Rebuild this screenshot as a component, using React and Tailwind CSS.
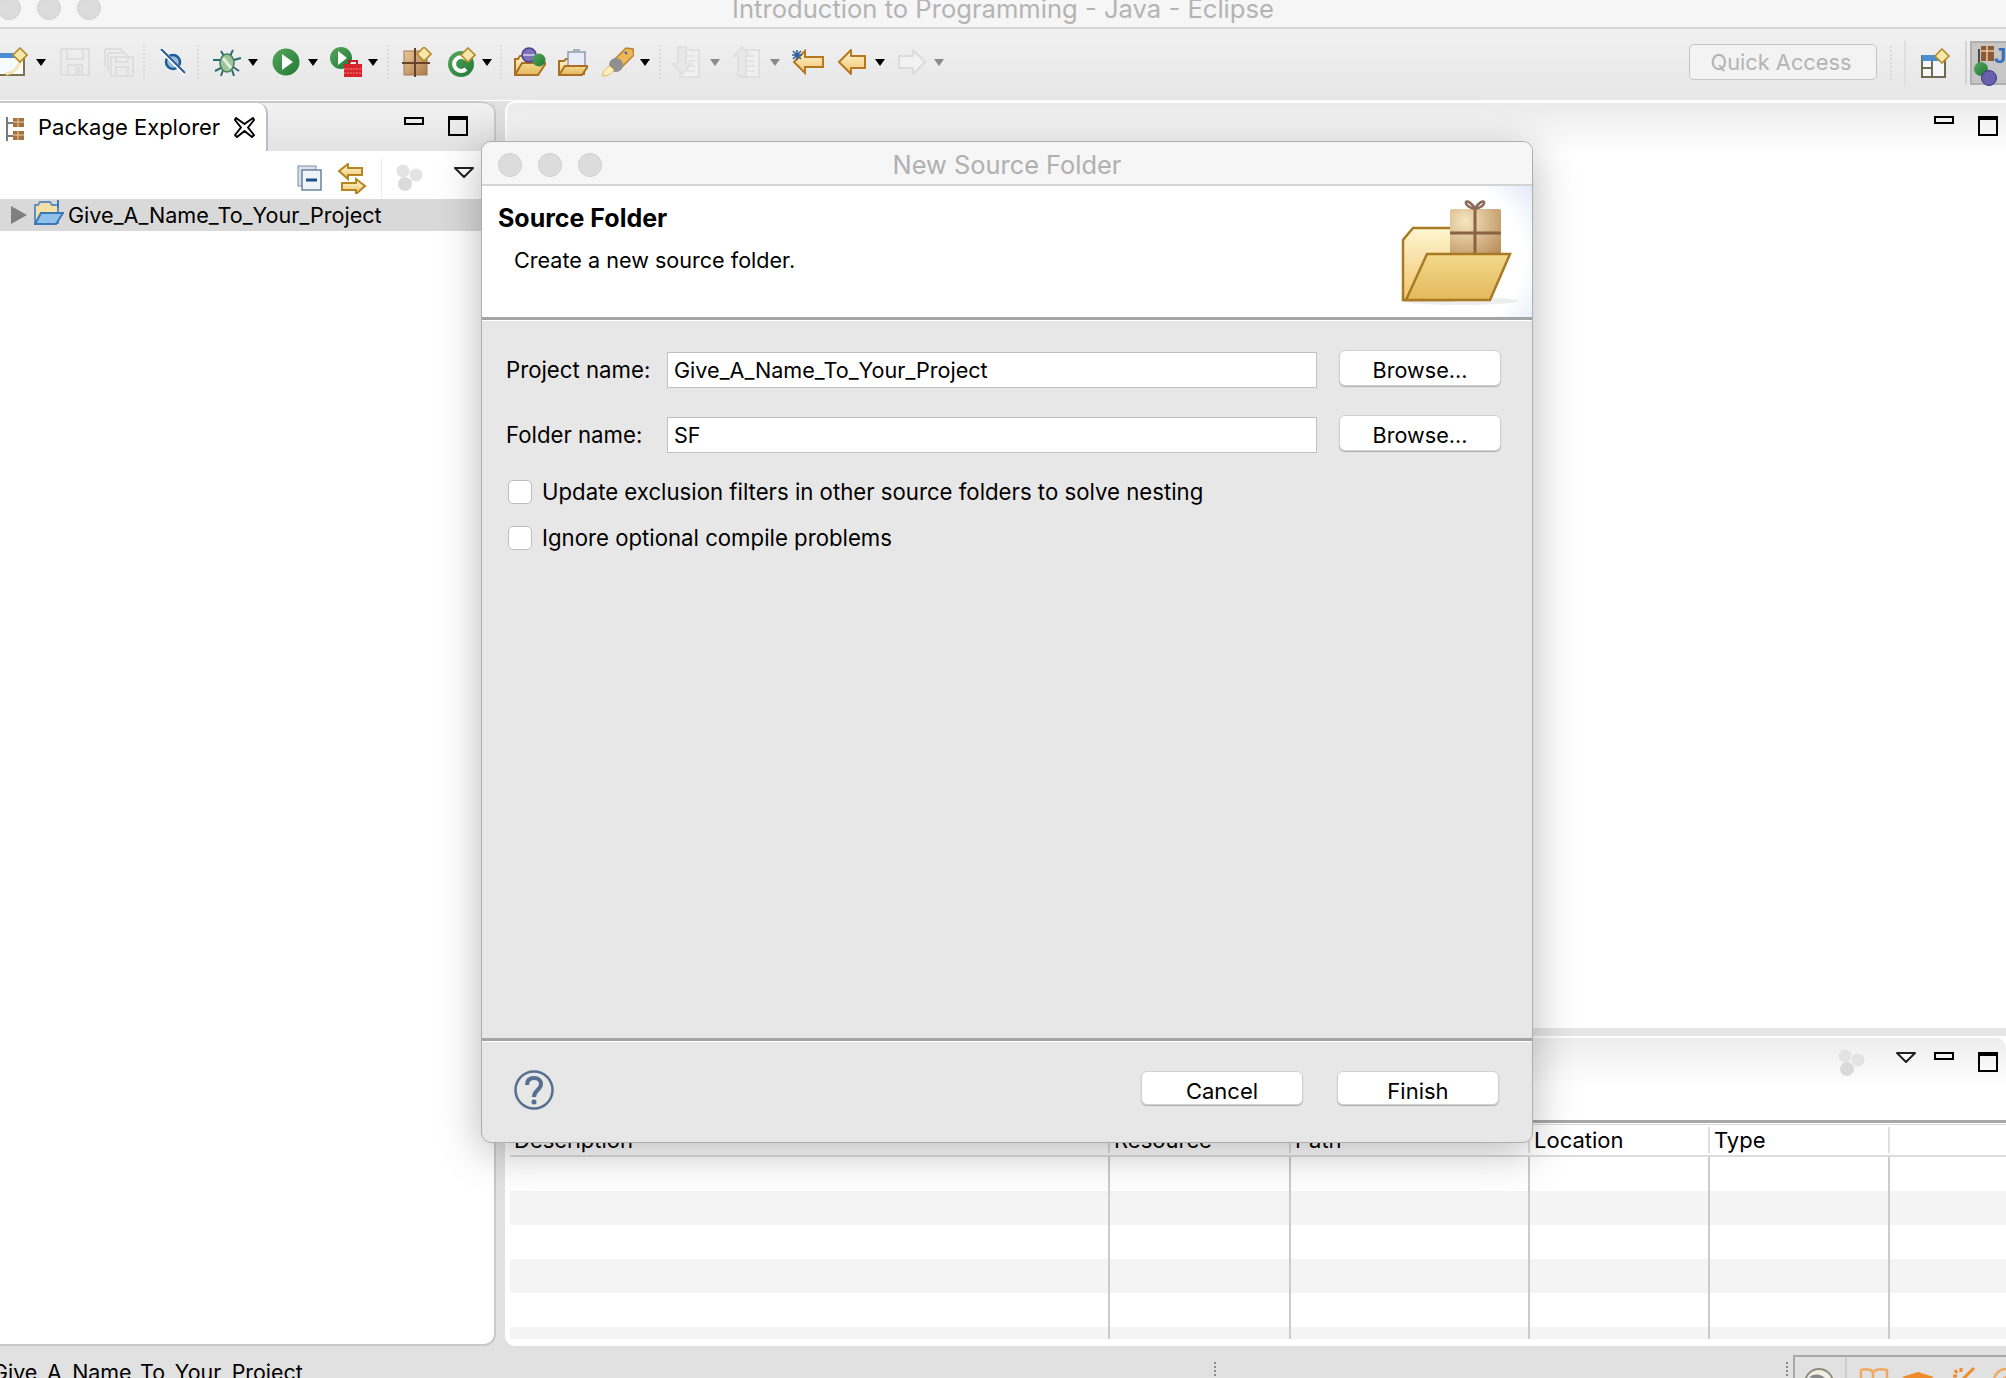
const font = { fontFamily: "Inter, 'Liberation Sans', sans-serif" };

function Defs() {
  return (
    <svg className="absolute w-0 h-0">
      <defs>
        <linearGradient id="gold" x1="0" y1="0" x2="0" y2="1">
          <stop offset="0" stopColor="#fff6d2" />
          <stop offset="1" stopColor="#f1c46c" />
        </linearGradient>
        <linearGradient id="green" x1="0" y1="0" x2="1" y2="1">
          <stop offset="0" stopColor="#58a55c" />
          <stop offset="1" stopColor="#1f7a35" />
        </linearGradient>
        <linearGradient id="tan" x1="0" y1="0" x2="1" y2="1">
          <stop offset="0" stopColor="#e9c89a" />
          <stop offset="1" stopColor="#a97a48" />
        </linearGradient>
        <radialGradient id="box" cx="0.3" cy="0.25" r="0.9">
          <stop offset="0" stopColor="#f6e6bf" />
          <stop offset="1" stopColor="#b98d5c" />
        </radialGradient>
        <linearGradient id="flap" x1="0" y1="0" x2="0" y2="1">
          <stop offset="0" stopColor="#f3d98c" />
          <stop offset="1" stopColor="#e3b95c" />
        </linearGradient>
        <radialGradient id="banner" cx="0.3" cy="0.55" r="1">
          <stop offset="0.65" stopColor="#ffffff" />
          <stop offset="1" stopColor="#d4dff5" />
        </radialGradient>
      </defs>
    </svg>
  );
}

function Caret({ className, grey }) {
  return (
    <svg className={className} width="10" height="7" viewBox="0 0 10 7">
      <path d="M0 0h10L5 7z" fill={grey ? "#8a8a8a" : "#000"} />
    </svg>
  );
}

function Dots({ className }) {
  return <div className={`w-[2px] h-[34px] border-l-2 border-dotted border-[#dcdad4] ${className}`} />;
}

function Diamond({ x, y }) {
  return <path d={`M${x} ${y - 7}l7 7-7 7-7-7z`} fill="#f7e7a8" stroke="#b48a2c" strokeWidth="1.6" />;
}

function NewWizard({ className }) {
  return (
    <svg className={className} width="30" height="30" viewBox="0 0 30 30">
      <rect x="1" y="7" width="25" height="21" fill="#f6fbff" stroke="#7d7346" strokeWidth="2" />
      <rect x="1" y="6" width="25" height="5" fill="#4d8ed0" />
      <path d="M8 27c7-1 12-5 14-13" fill="none" stroke="#f6e3ae" strokeWidth="3" />
      <Diamond x="22" y="8" />
    </svg>
  );
}

function Save({ className }) {
  return (
    <svg className={className} width="30" height="30" viewBox="0 0 30 30" fill="none" stroke="#dedede" strokeWidth="2">
      <path d="M1 2h28v26H1z" />
      <path d="M7 2v10h16V2M8 28V18h14v10" />
      <path d="M16 21h3v7h-3z" fill="#dedede" />
    </svg>
  );
}

function SaveAll({ className }) {
  return (
    <svg className={className} width="30" height="30" viewBox="0 0 30 30" fill="none" stroke="#dedede" strokeWidth="2">
      <path d="M1 2h16l2 3M4 6h17l2 3" />
      <path d="M1 2v18M4 6v18" />
      <path d="M7 10h22v19H7z" />
      <path d="M12 29v-9h12v9M12 10v5h12v-5" />
    </svg>
  );
}

function SkipBreak({ className }) {
  return (
    <svg className={className} width="26" height="26" viewBox="0 0 26 26">
      <circle cx="13" cy="13" r="7" fill="#9ab8d8" stroke="#1d5e9a" strokeWidth="2.5" />
      <path d="M1 1l24 24" stroke="#ffffff" strokeWidth="4" />
      <path d="M1 0l24 24" stroke="#23588f" strokeWidth="2" />
    </svg>
  );
}

function Bug({ className }) {
  return (
    <svg className={className} width="31" height="30" viewBox="0 0 31 30">
      <g stroke="#2d6a74" strokeWidth="2" fill="none">
        <path d="M9 4l3 5M21 3l-3 6M1 13l7 0 2 2M29 11l-7 2-2 2M3 24l6-3 2-2M27 24l-6-4-2-1M11 23l-2 6M20 23l2 6" />
      </g>
      <ellipse cx="15" cy="16" rx="7" ry="9" fill="#9fc39b" stroke="#3c7d5c" strokeWidth="1.5" />
      <path d="M11 11l8 10" stroke="#e2efd8" strokeWidth="3" />
    </svg>
  );
}

function Run({ className }) {
  return (
    <svg className={className} width="28" height="28" viewBox="0 0 28 28">
      <circle cx="14" cy="14" r="13.5" fill="url(#green)" />
      <path d="M10 6l11 8-11 8z" fill="#fff" />
    </svg>
  );
}

function RunExt({ className }) {
  return (
    <svg className={className} width="32" height="30" viewBox="0 0 32 30">
      <circle cx="11" cy="11" r="11" fill="url(#green)" />
      <path d="M8 4l9 7-9 7z" fill="#fff" />
      <path d="M14 17h18v13H14z" fill="#d8232a" />
      <path d="M19 17v-3h8v3" fill="none" stroke="#c01d24" strokeWidth="2" />
      <path d="M14 22h18M14 26h18" stroke="#f3898c" strokeWidth="1" strokeDasharray="2 1" />
    </svg>
  );
}

function NewPackage({ className }) {
  return (
    <svg className={className} width="30" height="30" viewBox="0 0 30 30">
      <rect x="2" y="4" width="23" height="24" fill="url(#tan)" stroke="#a07a50" />
      <path d="M0 16h28M13 1v29" stroke="#68432a" strokeWidth="2" />
      <Diamond x="22" y="7" />
    </svg>
  );
}

function NewClass({ className }) {
  return (
    <svg className={className} width="28" height="30" viewBox="0 0 28 30">
      <circle cx="13" cy="17" r="13" fill="url(#green)" />
      <path d="M18 12a7 7 0 1 0 0 10" fill="none" stroke="#fff" strokeWidth="4" />
      <Diamond x="20" y="8" />
    </svg>
  );
}

function OpenFolder() {
  return (
    <>
      <path d="M1 27V12h3l2-3h10l2 3h6v15z" fill="url(#gold)" stroke="#a96f24" strokeWidth="2" />
      <path d="M1 28l7-12h24l-8 12z" fill="url(#flap)" stroke="#a96f24" strokeWidth="2" />
    </>
  );
}

function OpenType({ className }) {
  return (
    <svg className={className} width="32" height="30" viewBox="0 0 32 30">
      <OpenFolder />
      <circle cx="15" cy="8" r="7" fill="#7c72b5" stroke="#4a3f8f" strokeWidth="1.5" />
      <path d="M9 8h12" stroke="#d8d4ee" strokeWidth="1.5" />
      <circle cx="25" cy="13" r="6.5" fill="url(#green)" />
    </svg>
  );
}

function OpenTask({ className }) {
  return (
    <svg className={className} width="30" height="30" viewBox="0 0 30 30">
      <path d="M1 27V14h5l2-2h18v15z" fill="url(#gold)" stroke="#a96f24" strokeWidth="2" />
      <rect x="10" y="5" width="17" height="15" fill="#e7ecf6" stroke="#8f99b0" strokeWidth="1.5" />
      <rect x="15" y="2" width="7" height="4" fill="#a7aebd" />
      <path d="M1 28l6-9h23l-6 9z" fill="url(#flap)" stroke="#a96f24" strokeWidth="2" />
    </svg>
  );
}

function Pen({ className }) {
  return (
    <svg className={className} width="32" height="30" viewBox="0 0 32 30">
      <path d="M12 13L24 1l7 1 1 6-13 13z" fill="#eeb659" stroke="#b4852f" strokeWidth="1.5" />
      <path d="M23 5l2 2" stroke="#3a62a8" strokeWidth="2" />
      <circle cx="14" cy="18" r="7" fill="#8f8f8f" />
      <path d="M0 29c2-6 4-8 8-10l4 4c-3 4-6 6-12 6z" fill="#fff1c2" stroke="#e5b653" />
    </svg>
  );
}

function NextAnn({ className, up }) {
  return (
    <svg className={className} width="28" height="32" viewBox="0 0 28 32" fill="none" stroke="#e0e0e0" strokeWidth="2">
      <path d="M8 4h19v27H8z" fill="#f0f0f0" />
      <path d="M13 10h10M13 15h10M13 20h10M13 25h10" strokeWidth="1.5" />
      {up ? (
        <path d="M10 1L2 10h4v20h8V10h4z" fill="#e8e8e8" />
      ) : (
        <path d="M6 1h8v17h5l-9 10-9-10h5z" fill="#e8e8e8" />
      )}
    </svg>
  );
}

function LastEdit({ className }) {
  return (
    <svg className={className} width="33" height="26" viewBox="0 0 33 26">
      <path d="M3 13L14 2v6h18v10H14v6z" fill="url(#gold)" stroke="#b5771f" strokeWidth="2" />
      <path d="M6 1v10M1 6h10M2 2l8 8M10 2l-8 8" stroke="#2f5f9e" strokeWidth="1.6" />
    </svg>
  );
}

function Back({ className }) {
  return (
    <svg className={className} width="29" height="26" viewBox="0 0 29 26">
      <path d="M2 13L14 1v6h14v12H14v6z" fill="url(#gold)" stroke="#b5771f" strokeWidth="2" strokeLinejoin="round" />
    </svg>
  );
}

function Forward({ className }) {
  return (
    <svg className={className} width="29" height="26" viewBox="0 0 29 26">
      <path d="M27 13L15 1v6H1v12h14v6z" fill="#f2f2f2" stroke="#dcdcdc" strokeWidth="2" strokeLinejoin="round" />
    </svg>
  );
}

function NewPerspective({ className }) {
  return (
    <svg className={className} width="30" height="30" viewBox="0 0 30 30">
      <rect x="1" y="8" width="23" height="21" fill="#f5f8fb" stroke="#6f6a50" strokeWidth="2" />
      <rect x="1" y="7" width="23" height="6" fill="#4d8ed0" />
      <path d="M11 13v16M1 20h10" stroke="#6f6a50" strokeWidth="2" />
      <Diamond x="21" y="8" />
    </svg>
  );
}

function JavaPerspective() {
  return (
    <svg width="36" height="44" viewBox="0 0 36 44">
      <path d="M7 6v18" stroke="#4a4a4a" strokeWidth="2" />
      <rect x="9" y="3" width="13" height="15" fill="#8c5a34" />
      <path d="M9 8h13M15 3v15" stroke="#e4c9a4" strokeWidth="1.5" />
      <circle cx="9" cy="26" r="7" fill="url(#green)" />
      <circle cx="17" cy="35" r="7.5" fill="#6a60ac" stroke="#3e3587" />
      <text x="22" y="20" fontSize="22" fontWeight="700" fill="#3770bd" fontFamily="Liberation Sans">J</text>
    </svg>
  );
}

function Bubbles({ className }) {
  return (
    <svg className={className} width="28" height="28" viewBox="0 0 28 28" fill="#e3e3e3">
      <circle cx="8" cy="7" r="6.5" />
      <circle cx="21" cy="11" r="6.5" />
      <circle cx="10" cy="20" r="7" fill="#dadada" />
    </svg>
  );
}

function Minimize({ className }) {
  return <div className={`w-[20px] h-[8px] border-2 border-black ${className}`} />;
}

function Maximize({ className }) {
  return <div className={`w-[20px] h-[20px] border-2 border-t-[4px] border-black ${className}`} />;
}

function ViewMenu({ className }) {
  return (
    <svg className={className} width="20" height="11" viewBox="0 0 20 11">
      <path d="M1 1h18l-9 9z" fill="#fff" stroke="#222" strokeWidth="2" strokeLinejoin="round" />
    </svg>
  );
}

function Toolbar() {
  return (
    <div className="flex h-[71px] bg-gradient-to-b from-[#f1f1f1] to-[#e6e6e6] overflow-hidden">
      <div className="flex flex-1 items-center h-[63px] pt-[4px] border-b border-[#ece9dd]">
        <NewWizard className="ml-[-2px]" />
        <Caret className="ml-[8px]" />
        <Save className="ml-[14px]" />
        <SaveAll className="ml-[14px]" />
        <Dots className="ml-[9px]" />
        <SkipBreak className="ml-[15px]" />
        <Dots className="ml-[11px]" />
        <Bug className="ml-[13px]" />
        <Caret className="ml-[5px]" />
        <Run className="ml-[14px]" />
        <Caret className="ml-[8px]" />
        <RunExt className="ml-[12px]" />
        <Caret className="ml-[6px]" />
        <Dots className="ml-[9px]" />
        <NewPackage className="ml-[13px]" />
        <NewClass className="ml-[16px]" />
        <Caret className="ml-[6px]" />
        <Dots className="ml-[8px]" />
        <OpenType className="ml-[12px]" />
        <OpenTask className="ml-[12px]" />
        <Pen className="ml-[14px]" />
        <Caret className="ml-[6px]" />
        <Dots className="ml-[9px]" />
        <NextAnn className="ml-[11px]" />
        <Caret className="ml-[10px]" grey />
        <NextAnn className="ml-[12px]" up />
        <Caret className="ml-[10px]" grey />
        <LastEdit className="ml-[11px]" />
        <Back className="ml-[13px]" />
        <Caret className="ml-[9px]" />
        <Forward className="ml-[13px]" />
        <Caret className="ml-[7px]" grey />
        <div className="ml-auto mr-[12px] w-[188px] h-[36px] pr-[4px] flex items-center justify-center bg-[#f3f3f3] border border-[#c4c4c4] rounded-[5px] text-[21.8px] text-[#b4b4b4]">
          Quick Access
        </div>
      </div>
      <div className="flex items-center w-[117px] h-[63px] pt-[4px]">
        <Dots className="ml-[1px] shrink-0" />
        <div className="ml-[12px] w-[2px] h-[44px] bg-[#e0e0e0] shrink-0" />
        <NewPerspective className="ml-[15px] shrink-0" />
        <div className="ml-[14px] w-[2px] h-[44px] bg-[#d4d4d4] shrink-0" />
        <div className="ml-[3px] shrink-0 w-[44px] h-[44px] bg-[#c6c6c6] border-2 border-[#b0b0b0]">
          <JavaPerspective />
        </div>
      </div>
    </div>
  );
}

function PackageExplorer() {
  return (
    <div className="w-[496px] flex flex-col bg-white border-r-2 border-b-2 border-[#c9c9c9] rounded-br-[12px] rounded-tr-[12px]">
      <div className="flex h-[50px] bg-gradient-to-b from-[#f1f1f1] to-[#e3e3e3] border-t-2 border-[#c9c9c9] rounded-tr-[12px]">
        <div className="flex items-center w-[268px] h-[48px] bg-white border-r-2 border-[#b9bdc9] rounded-tr-[10px]">
          <svg className="ml-[6px] mt-[4px]" width="20" height="24" viewBox="0 0 20 24">
            <path d="M1 0v24" stroke="#7a7a7a" strokeWidth="2" />
            <path d="M1 6h6M1 19h6" stroke="#7a7a7a" strokeWidth="2" />
            <rect x="7" y="1" width="11" height="9" fill="#a8703a" />
            <rect x="7" y="14" width="11" height="9" fill="#a8703a" />
            <path d="M7 5h11M12 1v9M7 18h11M12 14v9" stroke="#e8cfa8" />
          </svg>
          <span className="ml-[12px] text-[22px] text-black">Package Explorer</span>
          <svg className="ml-[14px]" width="21" height="21" viewBox="0 0 21 21">
            <path d="M2 1l8.500 6L19 1l1 2-6 7.500 6 7.500-2 2-7.500-6L3 20l-2-2 6-7.500L1 3z" fill="#fff" stroke="#000" strokeWidth="2" strokeLinejoin="round" />
          </svg>
        </div>
        <Minimize className="ml-[136px] mt-[14px]" />
        <Maximize className="ml-[24px] mt-[13px]" />
      </div>
      <div className="flex items-center h-[48px] pt-[6px]">
        <svg className="ml-[297px]" width="25" height="26" viewBox="0 0 25 26">
          <rect x="1" y="1" width="18" height="20" fill="#d6dfea" stroke="#7d8fa6" />
          <rect x="5" y="5" width="19" height="20" fill="#eef3f8" stroke="#6a83a0" strokeWidth="1.500" />
          <path d="M9 15h11" stroke="#1b4f88" strokeWidth="3" />
        </svg>
        <svg className="ml-[15px]" width="30" height="31" viewBox="0 0 30 31">
          <path d="M2 8l9-7v4h14v7H11v4z" fill="url(#gold)" stroke="#b5861f" strokeWidth="2" />
          <path d="M28 23l-9-7v4H5v7h14v4z" fill="url(#gold)" stroke="#b5861f" strokeWidth="2" />
        </svg>
        <div className="ml-[14px] w-[1px] h-[40px] bg-[#e8e8e8]" />
        <Bubbles className="ml-[13px]" />
        <ViewMenu className="ml-[31px] mb-[12px]" />
      </div>
      <div className="flex items-center h-[32px] bg-[#d9d9d9]">
        <svg className="ml-[11px]" width="16" height="18" viewBox="0 0 16 18">
          <path d="M0 0l16 9-16 9z" fill="#7f7f7f" />
        </svg>
        <svg className="ml-[7px] mb-[6px]" width="30" height="26" viewBox="0 0 30 26">
          <path d="M1 24V6h3l2-3h10l2 3h6v18z" fill="#f5e1a6" stroke="#5f8fc4" strokeWidth="2" />
          <path d="M1 25l6-11h22l-7 11z" fill="#8fc1ec" stroke="#3a78b8" strokeWidth="2" />
          <path d="M24 1v8" stroke="#3a78b8" strokeWidth="2" />
        </svg>
        <span className="ml-[4px] text-[21.6px] text-black">Give_A_Name_To_Your_Project</span>
      </div>
    </div>
  );
}

const columns = ["Description", "Resource", "Path", "Location", "Type", ""];

function Row({ grey, short }) {
  return (
    <div
      className={`grid grid-cols-[600px_181px_239px_180px_180px_1fr] ${short ? "h-[12px]" : "h-[34px]"} ${
        grey ? "bg-[#f4f4f4]" : "bg-white"
      }`}
    >
      {columns.map((c, i) => (
        <div key={i} className={i < 5 ? "border-r-2 border-[#cbcbcb]" : ""} />
      ))}
    </div>
  );
}

function ProblemsPanel() {
  return (
    <div className="flex-1 flex flex-col bg-white rounded-bl-[10px]">
      <div className="h-[85px] flex bg-[linear-gradient(#ededed,#ffffff_60%)] rounded-t-[10px] border-b-[3px] border-[#a8a8a8]">
        <Bubbles className="ml-[1332px] mt-[11px]" />
        <ViewMenu className="ml-[31px] mt-[14px]" />
        <Minimize className="ml-[18px] mt-[14px]" />
        <Maximize className="ml-[24px] mt-[14px]" />
      </div>
      <div className="pl-[5px] pt-[1px] flex-1 flex flex-col">
        <div className="grid grid-cols-[600px_181px_239px_180px_180px_1fr] h-[33px] items-center border-t border-b-2 border-[#dcdcdc] text-[22px] text-black">
          {columns.map((c, i) => (
            <div key={i} className={`h-[26px] leading-[26px] pl-[4px] ${i < 5 ? "border-r-2 border-[#dedede]" : ""}`}>
              {c}
            </div>
          ))}
        </div>
        <Row />
        <Row grey />
        <Row />
        <Row grey />
        <Row />
        <Row grey short />
      </div>
    </div>
  );
}

function Dialog() {
  return (
    <div className="absolute left-[481px] top-[141px] w-[1052px] h-[1002px] flex flex-col rounded-[10px] overflow-hidden border border-[#aeaeae] bg-[#e7e7e7] shadow-[0_8px_44px_rgba(0,0,0,0.28)]">
      <div className="relative flex items-center justify-center h-[44px] pt-[5px] bg-[#f6f6f6] border-b-2 border-[#d4d4d4] text-[25.4px] text-[#b0b0b0]">
        <div className="absolute left-[16px] top-[11px] flex gap-[16px]">
          <div className="w-[24px] h-[24px] rounded-full bg-[#dcdcdc] border border-[#d0d0d0]" />
          <div className="w-[24px] h-[24px] rounded-full bg-[#dcdcdc] border border-[#d0d0d0]" />
          <div className="w-[24px] h-[24px] rounded-full bg-[#dcdcdc] border border-[#d0d0d0]" />
        </div>
        New Source Folder
      </div>
      <div className="relative h-[134px] bg-white border-b-[3px] border-[#a4a4a4] text-black">
        <div className="pl-[16px] pt-[17px] text-[25px] leading-[30px] font-bold">Source Folder</div>
        <div className="pl-[32px] pt-[12px] text-[21.6px] leading-[30px]">Create a new source folder.</div>
        <svg className="absolute right-0 top-0" width="162" height="131" viewBox="0 0 162 131">
          <rect width="162" height="131" fill="url(#banner)" />
          <ellipse cx="90" cy="115" rx="58" ry="4" fill="#d5d5d5" opacity="0.4" />
          <path d="M33 114V54l10-12h40v72z" fill="url(#gold)" stroke="#a97a24" strokeWidth="2.500" />
          <rect x="80" y="23" width="51" height="50" rx="2" fill="url(#box)" />
          <path d="M105 23v50M80 47h51" stroke="#8a6244" strokeWidth="3" />
          <path d="M105 23c-2-5-8-9-9-7-1 3 4 6 9 7 5-1 10-4 9-7-1-2-7 2-9 7z" fill="none" stroke="#8a6a58" strokeWidth="2.500" />
          <path d="M57 68h83l-20 46H36z" fill="url(#flap)" stroke="#a97a24" strokeWidth="2.500" />
        </svg>
      </div>
      <div className="flex-1 pt-[31px] pl-[24px] border-t border-white text-[22.2px] text-black">
        <div className="flex items-center h-[36px]">
          <div className="w-[161px]">Project name:</div>
          <div className="w-[650px] h-[36px] flex items-center pl-[6px] text-[21.6px] bg-white border border-[#c0c0c0]">Give_A_Name_To_Your_Project</div>
          <button className="ml-[22px] mb-[4px] pt-[3px] w-[162px] h-[36px] text-[21.6px] bg-white border border-[#d0d0d0] rounded-[6px] shadow-[0_1px_1px_rgba(0,0,0,0.25)]">Browse...</button>
        </div>
        <div className="flex items-center h-[36px] mt-[29px]">
          <div className="w-[161px]">Folder name:</div>
          <div className="w-[650px] h-[36px] flex items-center pl-[6px] text-[21.6px] bg-white border border-[#c0c0c0]">SF</div>
          <button className="ml-[22px] mb-[4px] pt-[3px] w-[162px] h-[36px] text-[21.6px] bg-white border border-[#d0d0d0] rounded-[6px] shadow-[0_1px_1px_rgba(0,0,0,0.25)]">Browse...</button>
        </div>
        <div className="flex items-center h-[24px] mt-[27px]">
          <div className="ml-[2px] w-[24px] h-[24px] bg-white border border-[#bdbdbd] rounded-[5px]" />
          <span className="ml-[10px]">Update exclusion filters in other source folders to solve nesting</span>
        </div>
        <div className="flex items-center h-[24px] mt-[22px]">
          <div className="ml-[2px] w-[24px] h-[24px] bg-white border border-[#bdbdbd] rounded-[5px]" />
          <span className="ml-[10px]">Ignore optional compile problems</span>
        </div>
      </div>
      <div className="flex items-start h-[104px] border-t-[3px] border-[#a4a4a4] text-[22px] text-black">
        <div className="w-full h-full flex items-start border-t border-white pt-[29px]">
          <svg className="ml-[32px] mt-[-1px]" width="40" height="40" viewBox="0 0 40 40">
            <circle cx="20" cy="20" r="18.500" fill="none" stroke="#566f90" strokeWidth="2.500" />
            <path d="M13 15c0-5 3-7 7-7s7 2 7 6c0 6-7 6-7 13" fill="none" stroke="#566f90" strokeWidth="4" />
            <circle cx="20" cy="32" r="2.500" fill="#566f90" />
          </svg>
          <button className="ml-[587px] w-[162px] h-[34px] pt-[3px] bg-white border border-[#d0d0d0] rounded-[6px] shadow-[0_1px_1px_rgba(0,0,0,0.25)]">Cancel</button>
          <button className="ml-[34px] w-[162px] h-[34px] pt-[3px] bg-white border border-[#d0d0d0] rounded-[6px] shadow-[0_1px_1px_rgba(0,0,0,0.25)]">Finish</button>
        </div>
      </div>
    </div>
  );
}

function StatusBar() {
  return (
    <div className="flex h-[32px] bg-[#e1e1e1] overflow-hidden text-[21.4px] text-black">
      <span className="ml-[-8px] mt-[13px] leading-[26px] w-[1222px] shrink-0">Give_A_Name_To_Your_Project</span>
      <div className="mt-[16px] w-[2px] h-[14px] border-l-2 border-dotted border-[#8a8a8a]" />
      <div className="ml-[570px] mt-[16px] w-[2px] h-[14px] border-l-2 border-dotted border-[#8a8a8a]" />
      <div className="ml-[5px] mt-[9px] flex-1 h-[40px] flex items-start border-t-2 border-l-2 border-[#a8a8a8]">
        <svg className="ml-[8px] mt-[10px]" width="32" height="22" viewBox="0 0 32 22">
          <circle cx="16" cy="16" r="14" fill="#f0efe6" stroke="#8c8c7c" strokeWidth="2" />
          <path d="M6 10c6-4 12-3 16 1-4 1-10 1-16-1z" fill="#888" />
          <path d="M18 12h10v8H18z" fill="#c9962f" />
        </svg>
        <div className="ml-[10px] w-[2px] h-[34px] bg-[#cfcfcf]" />
        <svg className="ml-[12px] mt-[10px]" width="30" height="22" viewBox="0 0 30 22" fill="none" stroke="#efa960" strokeWidth="2.500">
          <path d="M2 3c4-1 9-1 12 2 3-3 9-3 14-2v18H2zM14 5v16" />
        </svg>
        <svg className="ml-[13px] mt-[15px]" width="32" height="16" viewBox="0 0 32 16">
          <path d="M0 5l16-5 16 5-16 6z" fill="#ee8c2a" />
          <path d="M8 10v6h16v-6l-8 3z" fill="#ee8c2a" />
        </svg>
        <svg className="ml-[18px] mt-[10px]" width="24" height="24" viewBox="0 0 24 24" fill="none" stroke="#ee8c2a" strokeWidth="3">
          <path d="M22 1L3 20M3 3l2 3M9 1v4M1 9h4" />
        </svg>
        <svg className="ml-[16px] mt-[10px]" width="24" height="24" viewBox="0 0 24 24" fill="none" stroke="#efa960" strokeWidth="2.500">
          <circle cx="14" cy="14" r="12" />
          <path d="M9 19l3-8 8-3" />
        </svg>
      </div>
    </div>
  );
}

export default function App() {
  return (
    <div className="relative w-[2006px] h-[1378px] overflow-hidden bg-[#e1e1e1] select-none" style={font}>
      <Defs />
      <div className="relative flex items-start justify-center h-[29px] bg-[#f6f6f6] border-b-2 border-[#d6d6d6] overflow-hidden">
        <div className="absolute left-0 top-[-4px] flex gap-[16px]">
          <div className="w-[24px] h-[24px] ml-[-3px] rounded-full bg-[#dcdcdc] border border-[#d0d0d0]" />
          <div className="w-[24px] h-[24px] rounded-full bg-[#dcdcdc] border border-[#d0d0d0]" />
          <div className="w-[24px] h-[24px] rounded-full bg-[#dcdcdc] border border-[#d0d0d0]" />
        </div>
        <span className="mt-[-7px] text-[25.6px] leading-[32px] text-[#b4b4b4]">Introduction to Programming - Java - Eclipse</span>
      </div>
      <Toolbar />
      <div className="h-[1px] bg-white" />
      <div className="flex h-[1245px]">
        <PackageExplorer />
        <div className="flex-1 ml-[9px] flex flex-col">
          <div className="h-[927px] flex justify-end bg-[linear-gradient(#ebebeb,#ffffff_50px)] rounded-tl-[10px] border-t-2 border-l-2 border-white">
            <Minimize className="mr-[24px] mt-[13px]" />
            <Maximize className="mr-[8px] mt-[13px]" />
          </div>
          <div className="h-[8px] bg-[#e6e6e6]" />
          <div className="h-[2px] bg-white" />
          <ProblemsPanel />
        </div>
      </div>
      <StatusBar />
      <Dialog />
    </div>
  );
}
